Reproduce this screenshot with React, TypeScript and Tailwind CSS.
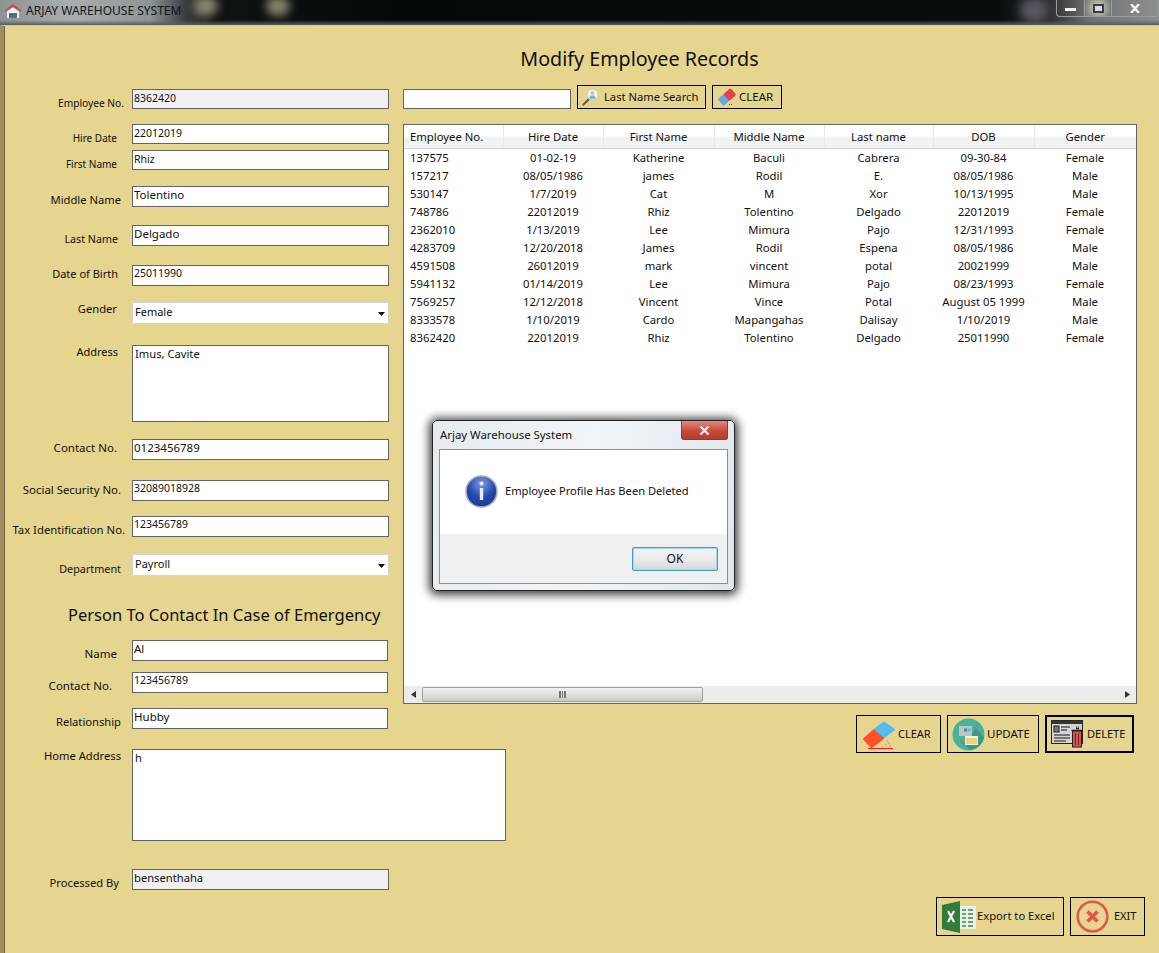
import type { ReactNode } from "react";

const rows = [
  ["137575", "01-02-19", "Katherine", "Baculi", "Cabrera", "09-30-84", "Female"],
  ["157217", "08/05/1986", "james", "Rodil", "E.", "08/05/1986", "Male"],
  ["530147", "1/7/2019", "Cat", "M", "Xor", "10/13/1995", "Male"],
  ["748786", "22012019", "Rhiz", "Tolentino", "Delgado", "22012019", "Female"],
  ["2362010", "1/13/2019", "Lee", "Mimura", "Pajo", "12/31/1993", "Female"],
  ["4283709", "12/20/2018", "James", "Rodil", "Espena", "08/05/1986", "Male"],
  ["4591508", "26012019", "mark", "vincent", "potal", "20021999", "Male"],
  ["5941132", "01/14/2019", "Lee", "Mimura", "Pajo", "08/23/1993", "Female"],
  ["7569257", "12/12/2018", "Vincent", "Vince", "Potal", "August 05 1999", "Male"],
  ["8333578", "1/10/2019", "Cardo", "Mapangahas", "Dalisay", "1/10/2019", "Male"],
  ["8362420", "22012019", "Rhiz", "Tolentino", "Delgado", "25011990", "Female"],
];

const columns = [
  { name: "Employee No.", width: "w-[99px]" },
  { name: "Hire Date", width: "w-[100px]" },
  { name: "First Name", width: "w-[111px]" },
  { name: "Middle Name", width: "w-[110px]" },
  { name: "Last name", width: "w-[109px]" },
  { name: "DOB", width: "w-[101px]" },
  { name: "Gender", width: "w-[102px]" },
];

// label box right edge and drop are per row, the form was hand placed in the designer
function Field({
  label,
  labelClass,
  className,
  children,
}: {
  label: string;
  labelClass: string;
  className: string;
  children: ReactNode;
}) {
  return (
    <div className={`flex items-start ${className}`}>
      <div className="h-0 w-[132px] shrink-0">
        <div className={`h-4 whitespace-nowrap text-right leading-4 ${labelClass}`}>{label}</div>
      </div>
      {children}
    </div>
  );
}

function TextBox({ value, className = "" }: { value: string; className?: string }) {
  return (
    <input
      readOnly
      value={value}
      className={`h-[21px] w-[257px] border border-[#646464] bg-white pb-[5px] pl-[1px] text-[11.5px] text-[#111] outline-none ${className}`}
    />
  );
}

function Combo({ value }: { value: string }) {
  return (
    <div className="flex h-[22px] w-[257px] items-center justify-between rounded-[1px] border border-[#d4d4d4] bg-white pb-[1px] pl-[2px] pr-[3px] text-[11px]">
      {value}
      <svg width="7" height="4" viewBox="0 0 7 4" className="mt-[3px]">
        <path d="M0 0h7L3.5 4z" fill="#111" />
      </svg>
    </div>
  );
}

function Area({ value, className }: { value: string; className: string }) {
  return (
    <textarea
      readOnly
      value={value}
      className={`block resize-none border border-[#646464] bg-white pl-[2px] text-[11.2px] leading-4 outline-none ${className}`}
    />
  );
}

function HouseIcon() {
  return (
    <svg width="16" height="16" viewBox="0 0 16 16">
      <path d="M0 7L8 1l8 6v2l-8-5.5L0 9z" fill="#d8434a" />
      <path d="M2 8.5L8 4.5l6 4V15H2z" fill="#eef1f3" />
      <path d="M4 10h8v5H4z" fill="#4e7c94" />
      <path d="M4 11.5h8M4 13h8" stroke="#2f5a70" strokeWidth="0.6" />
    </svg>
  );
}

function PersonSearchIcon() {
  return (
    <svg width="18" height="18" viewBox="0 0 18 18">
      <path d="M7 11L1.5 16.5" stroke="#6d5a3e" strokeWidth="2.2" strokeLinecap="round" />
      <circle cx="10.5" cy="6.5" r="5.6" fill="#eef3f4" stroke="#c9caba" strokeWidth="1" />
      <circle cx="10.5" cy="4.9" r="1.9" fill="#e6b98f" />
      <path d="M7.4 10.2c.2-2 1.4-3 3.1-3s2.9 1 3.1 3c-1.8 1.2-4.4 1.2-6.2 0z" fill="#7fb2d4" />
    </svg>
  );
}

function SmallEraser() {
  return (
    <svg width="18" height="18" viewBox="0 0 18 18">
      <g transform="rotate(-42 9 9)">
        <rect x="0.5" y="4.5" width="8.5" height="9" rx="1.5" fill="#6aa9e0" />
        <rect x="8" y="4.5" width="9.5" height="9" rx="1.5" fill="#e8404a" />
      </g>
      <path d="M11 16.5h3" stroke="#333" strokeWidth="0.8" strokeDasharray="1 1" />
    </svg>
  );
}

function BigEraser() {
  return (
    <svg width="34" height="29" viewBox="0 0 34 29">
      <path d="M12 10L22 2.5 32 9.5 21 18z" fill="#53bdf0" stroke="#53bdf0" strokeWidth="2" strokeLinejoin="round" />
      <path d="M11.5 10.5L21 18.5 9.5 27 2 19z" fill="#ff5126" stroke="#ff5126" strokeWidth="2" strokeLinejoin="round" />
      <path d="M6 28.5h25" stroke="#e8222a" strokeWidth="1" />
      <path d="M24 21h2M26 23h2M23 25h2M27 26h2M20 26h1" stroke="#f08a5c" strokeWidth="1.2" />
    </svg>
  );
}

function UpdateIcon() {
  return (
    <svg width="33" height="33" viewBox="0 0 33 33">
      <circle cx="16.5" cy="16.5" r="16" fill="#45b39d" />
      <path d="M24 11l8 8a16 16 0 0 1-14 13l-7-7z" fill="#3a9a88" />
      <rect x="7" y="8" width="13" height="10" fill="#b9c4cc" />
      <rect x="8.5" y="10.5" width="3" height="3" fill="#f2c94c" />
      <rect x="12" y="10.5" width="3" height="3" fill="#3d8fd1" />
      <rect x="15.5" y="10.5" width="3" height="3" fill="#6ac0b0" />
      <rect x="13" y="18" width="13" height="9" fill="#f0f0f0" />
      <rect x="14" y="20" width="11" height="6" fill="#f6d36b" />
      <path d="M21 10h3v3M12 25h-3v-3" stroke="#d9534f" strokeWidth="0.8" fill="none" />
    </svg>
  );
}

function DeleteIcon() {
  return (
    <svg width="33" height="28" viewBox="0 0 33 28">
      <rect x="0.5" y="0.5" width="31" height="23" fill="#d4d4d4" stroke="#222" />
      <rect x="0.5" y="0.5" width="31" height="3.5" fill="#333" />
      <rect x="3" y="6" width="5" height="6" fill="#777" stroke="#222" />
      <path d="M10 7h9M10 10h6M3 15h16M3 18h16M3 21h12" stroke="#555" strokeWidth="1.3" />
      <path d="M25 7h4" stroke="#222" strokeWidth="1" strokeDasharray="1 1" />
      <path d="M25 8.5h3M20.5 10.5h11" stroke="#222" strokeWidth="1.4" />
      <rect x="21.5" y="11" width="9" height="16" fill="#d9534f" stroke="#222" />
      <path d="M24.5 13v12M27.5 13v12" stroke="#7a2222" strokeWidth="1" />
    </svg>
  );
}

function ExcelIcon() {
  return (
    <svg width="34" height="32" viewBox="0 0 34 32">
      <rect x="17" y="5" width="17" height="23" fill="#e8f0e8" />
      <path d="M20 9h4M26 9h5M20 13h4M26 13h5M20 17h4M26 17h5M20 21h4M26 21h5M20 25h4M26 25h5" stroke="#3a8a4a" strokeWidth="1.6" />
      <path d="M0 4L18 0v32L0 28z" fill="#2e7d3a" />
      <path d="M6 10l6 11M12 10L6 21" stroke="#fff" strokeWidth="2.2" />
    </svg>
  );
}

function ExitIcon() {
  return (
    <svg width="33" height="33" viewBox="0 0 33 33">
      <circle cx="16.5" cy="16.5" r="14.8" fill="none" stroke="#e2574c" strokeWidth="2.6" />
      <path d="M11.5 11.5l10 10M21.5 11.5l-10 10" stroke="#e2574c" strokeWidth="3.6" />
    </svg>
  );
}

function InfoIcon() {
  return (
    <svg width="33" height="33" viewBox="0 0 33 33">
      <defs>
        <radialGradient id="infoFill" cx="50%" cy="25%" r="80%">
          <stop offset="0%" stopColor="#7d9be0" />
          <stop offset="55%" stopColor="#2347ad" />
          <stop offset="100%" stopColor="#1a3a9c" />
        </radialGradient>
      </defs>
      <circle cx="16.5" cy="16.5" r="15.5" fill="url(#infoFill)" stroke="#a9adb5" strokeWidth="1.6" />
      <circle cx="16.5" cy="8.5" r="2" fill="#e8ecf5" />
      <path d="M14.8 13h3.4v12h-3.4z" fill="#e8ecf5" />
    </svg>
  );
}

function ActionButton({
  children,
  className,
}: {
  children: ReactNode;
  className: string;
}) {
  return (
    <button type="button" className={`flex items-center border-black text-[11px] text-[#111] ${className}`}>
      {children}
    </button>
  );
}

function TitleBar() {
  return (
    <div className="relative h-[25px] shrink-0 overflow-hidden bg-[linear-gradient(90deg,#8d9393_0,#a9aeae_70px,#8f9494_150px,#3b3e3e_185px,#101313_215px,#050808_400px,#0a0d0d_1000px,#2c2f2f_1050px,#6f7373_1090px,#8b8f8f_1159px)]">
      {/* blurred desktop showing through the glass */}
      <div className="absolute left-[194px] top-[-4px] h-5 w-6 rounded-full bg-[#b8b28c] opacity-70 blur-[5px]" />
      <div className="absolute left-[266px] top-[-4px] h-5 w-6 rounded-full bg-[#b8b28c] opacity-70 blur-[5px]" />
      <div className="absolute left-[1020px] top-[-2px] h-6 w-7 rounded-full bg-[#5b5560] blur-[5px]" />
      <div className="absolute inset-x-0 bottom-0 h-[5px] bg-[linear-gradient(transparent,#5a5d5e)]" />
      <div className="relative flex h-[22px] items-center pl-[5px]">
        <HouseIcon />
        <span className="ml-[5px] text-[12px] text-[#10181c]">ARJAY WAREHOUSE SYSTEM</span>
      </div>
      <div className="absolute right-0 top-0 flex h-[17px] items-center rounded-b-[4px] border-x border-b border-[#9a9d9d]">
        <div className="flex h-full w-[28px] items-center justify-center border-r border-[#9a9d9d]">
          <div className="mt-[3px] h-[3px] w-[11px] bg-[#f0f0f0]" />
        </div>
        <div className="flex h-full w-[27px] items-center justify-center border-r border-[#9a9d9d] bg-[radial-gradient(circle,#d8d8bc,#6f7270)]">
          <div className="h-[9px] w-[11px] border-2 border-[#33404a] bg-[#d8dcdc]" />
        </div>
        <div className="flex h-full w-[46px] items-center justify-center">
          <svg width="10" height="9" viewBox="0 0 10 9">
            <path d="M1 0l8 9M9 0L1 9" stroke="#f4f4f4" strokeWidth="2.4" />
          </svg>
        </div>
      </div>
    </div>
  );
}

function MessageDialog() {
  return (
    <div className="absolute left-[432px] top-[420px] h-[171px] w-[303px] rounded-[5px] border border-[#222] bg-[linear-gradient(100deg,#e6ebf0,#f1f5f8_50%,#dfe7ee)] shadow-[0_1px_10px_3px_rgba(0,0,0,0.75)]">
      <div className="flex h-7 items-center pl-[7px] text-[11.4px] text-[#111]">Arjay Warehouse System</div>
      <div className="absolute right-[6px] top-0 flex h-[19px] w-[47px] items-center justify-center rounded-b-[3px] border border-t-0 border-[#8c3a34] bg-[linear-gradient(#e58a7c,#c9483a_55%,#b53f33)]">
        <svg width="11" height="9" viewBox="0 0 11 9">
          <path d="M1.5 0.5l8 8M9.5 0.5l-8 8" stroke="#f4f4f4" strokeWidth="2.2" />
        </svg>
      </div>
      <div className="ml-[6px] flex h-[135px] w-[289px] flex-col border border-[#8a8f94] bg-white">
        <div className="flex h-[84px] items-center pb-[1px] pl-[25px]">
          <InfoIcon />
          <span className="ml-[7px] text-[11.15px] text-[#111]">Employee Profile Has Been Deleted</span>
        </div>
        <div className="flex flex-1 items-start justify-end bg-[#f0f0f0] pr-[9px] pt-[13px]">
          <button
            type="button"
            className="h-[24px] w-[86px] rounded-[2px] border border-[#3c9fd0] bg-[linear-gradient(#f4f4f4,#ebebeb_50%,#d8d8d8)] text-[12px] text-[#111] shadow-[inset_0_0_0_1px_#9fd8f2]"
          >
            OK
          </button>
        </div>
      </div>
    </div>
  );
}

export default function App() {
  return (
    <div className="relative flex h-[953px] w-[1159px] flex-col overflow-hidden bg-[#e5d58f] font-['Noto_Sans',sans-serif] text-[#111]">
      <TitleBar />
      <div className="flex flex-1 flex-col border-l-[4px] border-t border-l-[#a08c60] border-t-[#c9c5ae] shadow-[inset_1px_0_0_#6f6142]">
        <h1 className="h-[38px] pl-[116px] pt-[19px] text-center text-[19.7px] font-normal leading-[28px] text-[#111]">
          Modify Employee Records
        </h1>
        <div className="mt-[25px] flex flex-1">
          <div className="-ml-[4px] w-[403px] shrink-0">
            <Field label="Employee No." labelClass="text-[10.2px] pr-[8px] mt-[6px]" className="mt-0">
              <TextBox value="8362420" className="bg-[#f0f0f0]! h-5! pb-[3px]! text-[10.5px]!" />
            </Field>
            <Field label="Hire Date" labelClass="text-[10px] pr-[15px] mt-[6px]" className="mt-[15px]">
              <TextBox value="22012019" className="h-5! pb-[3px]! text-[10.5px]!" />
            </Field>
            <Field label="First Name" labelClass="text-[10px] pr-[15px] mt-[6px]" className="mt-[6px]">
              <TextBox value="Rhiz" className="h-5! pb-[3px]! text-[10.5px]!" />
            </Field>
            <Field label="Middle Name" labelClass="text-[11.2px] pr-[11px] mt-[6px]" className="mt-[16px]">
              <TextBox value="Tolentino" />
            </Field>
            <Field label="Last Name" labelClass="text-[10.7px] pr-[14px] mt-[6px]" className="mt-[18px]">
              <TextBox value="Delgado" />
            </Field>
            <Field label="Date of Birth" labelClass="text-[11px] pr-[14px] mt-[1px]" className="mt-[19px]">
              <TextBox value="25011990" className="text-[10.5px]!" />
            </Field>
            <Field label="Gender" labelClass="text-[11.2px] pr-[15px] -mt-[1px]" className="mt-[16px]">
              <Combo value="Female" />
            </Field>
            <Field label="Address" labelClass="text-[11px] pr-[14px] -mt-[1px]" className="mt-[21px]">
              <Area value="Imus, Cavite" className="h-[77px] w-[257px]" />
            </Field>
            <Field label="Contact No." labelClass="text-[11.5px] pr-[15px] mt-[1px]" className="mt-[17px]">
              <TextBox value="0123456789" />
            </Field>
            <Field label="Social Security No." labelClass="text-[11.4px] pr-[11px] mt-[2px]" className="mt-[20px]">
              <TextBox value="32089018928" className="text-[10.5px]!" />
            </Field>
            <Field label="Tax Identification No." labelClass="text-[11.3px] pr-[7px] mt-[6px]" className="mt-[15px]">
              <TextBox value="123456789" className="text-[10.5px]!" />
            </Field>
            <Field label="Department" labelClass="text-[10.8px] pr-[11px] mt-[7px]" className="mt-[17px]">
              <Combo value="Payroll" />
            </Field>
            <h2 className="ml-[68px] mt-[27px] h-[24px] whitespace-nowrap text-[16.5px] font-normal leading-[24px] text-[#111]">
              Person To Contact In Case of Emergency
            </h2>
            <Field label="Name" labelClass="text-[11.5px] pr-[15px] mt-[6px]" className="mt-[13px]">
              <TextBox value="Al" className="w-[256px]!" />
            </Field>
            <Field label="Contact No." labelClass="text-[11.5px] pr-[20px] mt-[6px]" className="mt-[11px]">
              <TextBox value="123456789" className="w-[256px]! text-[10.5px]!" />
            </Field>
            <Field label="Relationship" labelClass="text-[11.2px] pr-[11px] mt-[6px]" className="mt-[15px]">
              <TextBox value="Hubby" className="w-[256px]!" />
            </Field>
            <Field label="Home Address" labelClass="text-[11.2px] pr-[11px] -mt-[1px]" className="mt-[20px]">
              <Area value="h" className="h-[92px] w-[374px] shrink-0" />
            </Field>
            <Field label="Processed By" labelClass="text-[11.2px] pr-[13px] mt-[6px]" className="mt-[28px]">
              <TextBox value="bensenthaha" className="bg-[#f0f0f0]! text-[11.2px]!" />
            </Field>
          </div>

          <div className="flex min-w-0 flex-1 flex-col">
            <div className="-mt-[4px] flex h-[24px] items-start">
              <input
                readOnly
                className="mt-[4px] h-5 w-[168px] border border-[#646464] bg-white outline-none"
              />
              <ActionButton className="ml-[6px] h-[24px] w-[129px] border pl-[4px]">
                <PersonSearchIcon />
                <span className="ml-[4px] text-[11.2px]">Last Name Search</span>
              </ActionButton>
              <ActionButton className="ml-[6px] h-[24px] w-[70px] border pl-[5px]">
                <SmallEraser />
                <span className="ml-[3px] text-[11.5px]">CLEAR</span>
              </ActionButton>
            </div>

            <div className="mt-[15px] flex h-[580px] w-[734px] flex-col border border-[#646464] bg-white">
              <div className="min-h-0 flex-1">
                <table className="w-full table-fixed border-collapse text-[11.3px]">
                  <thead>
                    <tr className="h-[23px] bg-[linear-gradient(#ffffff_0,#ffffff_45%,#f1f2f4_55%,#f1f2f4_100%)]">
                      {columns.map((col, i) => (
                        <th
                          key={col.name}
                          className={`${col.width} border-b border-r border-b-[#d5d5d5] border-r-[#e6e8ea] pt-[2px] font-normal last:border-r-0 ${
                            i === 0 ? "pl-[6px] text-left" : "text-center"
                          }`}
                        >
                          {col.name}
                        </th>
                      ))}
                    </tr>
                  </thead>
                  <tbody>
                    {rows.map((row) => (
                      <tr key={row[0]} className="h-[18px]">
                        {row.map((cell, i) => (
                          <td key={i} className={`p-0 leading-[18px] ${i === 0 ? "pl-[6px] text-left" : "text-center"}`}>
                            {cell}
                          </td>
                        ))}
                      </tr>
                    ))}
                  </tbody>
                </table>
              </div>
              {/* horizontal scrollbar */}
              <div className="flex h-[17px] items-center bg-[#ececec]">
                <div className="flex w-[18px] justify-center">
                  <svg width="5" height="7" viewBox="0 0 5 7">
                    <path d="M5 0v7L0 3.5z" fill="#333" />
                  </svg>
                </div>
                <div className="flex h-[15px] w-[281px] items-center justify-center rounded-[2px] border border-[#a0a0a0] bg-[linear-gradient(#f0f0f0,#e0e0e0_50%,#c8c8c8)]">
                  <div className="h-[7px] w-[7px] border-x-2 border-[#777] bg-[linear-gradient(90deg,transparent_40%,#777_40%,#777_60%,transparent_60%)]" />
                </div>
                <div className="ml-auto flex w-[18px] justify-center">
                  <svg width="5" height="7" viewBox="0 0 5 7">
                    <path d="M0 0v7l5-3.5z" fill="#333" />
                  </svg>
                </div>
              </div>
            </div>

            <div className="mt-[11px] flex w-[731px] justify-end gap-[6px]">
              <ActionButton className="h-[38px] w-[85px] border pl-[5px]">
                <BigEraser />
                <span className="ml-[2px]">CLEAR</span>
              </ActionButton>
              <ActionButton className="h-[38px] w-[92px] border pl-[4px]">
                <UpdateIcon />
                <span className="ml-[2px] text-[11.5px]">UPDATE</span>
              </ActionButton>
              <ActionButton className="h-[38px] w-[89px] border-[2px] pl-[4px]">
                <DeleteIcon />
                <span className="ml-[3px]">DELETE</span>
              </ActionButton>
            </div>

            <div className="mb-[17px] mt-auto flex w-[742px] justify-end gap-[6px]">
              <ActionButton className="h-[39px] w-[128px] border pl-[5px]">
                <ExcelIcon />
                <span className="ml-[1px] text-[11.2px]">Export to Excel</span>
              </ActionButton>
              <ActionButton className="h-[39px] w-[75px] border pl-[5px]">
                <ExitIcon />
                <span className="ml-[5px]">EXIT</span>
              </ActionButton>
            </div>
          </div>
        </div>
      </div>
      <MessageDialog />
    </div>
  );
}
